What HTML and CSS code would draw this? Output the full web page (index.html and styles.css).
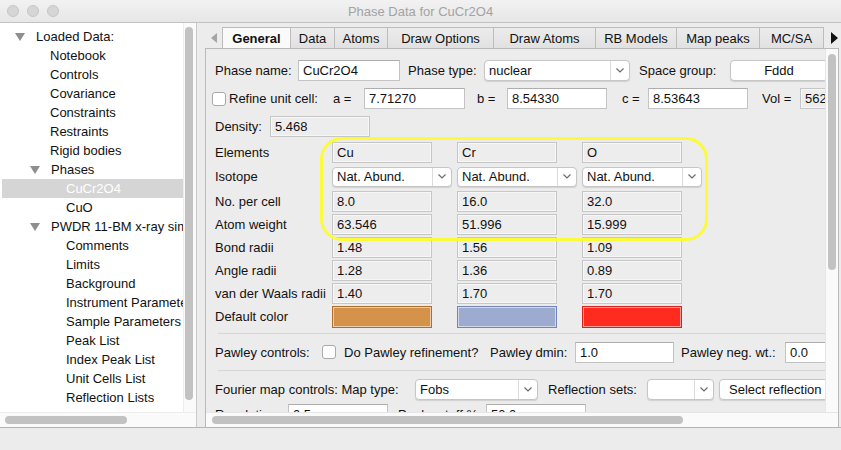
FILE: index.html
```html
<!DOCTYPE html>
<html>
<head>
<meta charset="utf-8">
<title>Phase Data for CuCr2O4</title>
<link rel="stylesheet" href="styles.css">
</head>
<body>
<div class="titlebar">
  <div class="lights"><span class="light"></span><span class="light"></span><span class="light"></span></div>
  <div class="title">Phase Data for CuCr2O4</div>
  <div></div>
</div>
<div class="main">
  <div class="tree-panel">
    <div class="tree-area">
      <ul class="tree">
        <li class="l0"><span class="tri"></span>Loaded Data:</li>
        <li class="l1">Notebook</li>
        <li class="l1">Controls</li>
        <li class="l1">Covariance</li>
        <li class="l1">Constraints</li>
        <li class="l1">Restraints</li>
        <li class="l1">Rigid bodies</li>
        <li class="l1t"><span class="tri"></span>Phases</li>
        <li class="l2 sel">CuCr2O4</li>
        <li class="l2">CuO</li>
        <li class="l1t"><span class="tri"></span>PWDR 11-BM x-ray simulation</li>
        <li class="l2">Comments</li>
        <li class="l2">Limits</li>
        <li class="l2">Background</li>
        <li class="l2">Instrument Parameters</li>
        <li class="l2">Sample Parameters</li>
        <li class="l2">Peak List</li>
        <li class="l2">Index Peak List</li>
        <li class="l2">Unit Cells List</li>
        <li class="l2">Reflection Lists</li>
      </ul>
      <div class="tree-vscroll"><div class="tree-vthumb"></div></div>
    </div>
    <div class="tree-hscroll"><div class="tree-hthumb"></div></div>
  </div>
  <div class="sash"></div>
  <div class="notebook">
    <div class="tabbar">
      <div class="tab-arrow left"><span class="arr-l"></span></div>
      <div class="tab active first w-general">General</div>
      <div class="tab w-data">Data</div>
      <div class="tab w-atoms">Atoms</div>
      <div class="tab w-drawopt">Draw Options</div>
      <div class="tab w-drawatoms">Draw Atoms</div>
      <div class="tab w-rb">RB Models</div>
      <div class="tab w-map">Map peaks</div>
      <div class="tab w-mcsa">MC/SA</div>
      <div class="tab-arrow right"><span class="arr-r"></span></div>
    </div>
    <div class="page">
      <div class="page-body">
        <div class="content">
          <div class="row r1">
            <span class="lbl lw-pname">Phase name:</span>
            <div class="field fw-pname">CuCr2O4</div>
            <span class="lbl lw-ptype">Phase type:</span>
            <div class="select sw-ptype"><span class="val">nuclear</span><span class="chev"><svg width="8" height="5" viewBox="0 0 8 5"><polyline points="0.5,0.5 4,4 7.5,0.5" fill="none" stroke="#6b6b6b" stroke-width="1.2"/></svg></span></div>
            <span class="lbl lw-sg">Space group:</span>
            <div class="btn bw-sg">Fddd</div>
          </div>
          <div class="row r2">
            <span class="check"></span>
            <span class="lbl lw-refine">Refine unit cell:</span>
            <span class="lbl lw-a">a =</span>
            <div class="field fw-a">7.71270</div>
            <span class="lbl lw-b">b =</span>
            <div class="field fw-b">8.54330</div>
            <span class="lbl lw-c">c =</span>
            <div class="field fw-b">8.53643</div>
            <span class="lbl lw-vol">Vol =</span>
            <div class="field ro fw-vol">562.41</div>
          </div>
          <div class="row r3">
            <span class="lbl lw-dens">Density:</span>
            <div class="field ro fw-std">5.468</div>
          </div>

          <div class="table">
            <span class="lbl">Elements</span>
            <div class="field ro fw-std">Cu</div>
            <div class="field ro fw-std">Cr</div>
            <div class="field ro fw-std">O</div>

            <span class="lbl">Isotope</span>
            <div class="select iso"><span class="val">Nat. Abund.</span><span class="chev"><svg width="8" height="5" viewBox="0 0 8 5"><polyline points="0.5,0.5 4,4 7.5,0.5" fill="none" stroke="#6b6b6b" stroke-width="1.2"/></svg></span></div>
            <div class="select iso"><span class="val">Nat. Abund.</span><span class="chev"><svg width="8" height="5" viewBox="0 0 8 5"><polyline points="0.5,0.5 4,4 7.5,0.5" fill="none" stroke="#6b6b6b" stroke-width="1.2"/></svg></span></div>
            <div class="select iso"><span class="val">Nat. Abund.</span><span class="chev"><svg width="8" height="5" viewBox="0 0 8 5"><polyline points="0.5,0.5 4,4 7.5,0.5" fill="none" stroke="#6b6b6b" stroke-width="1.2"/></svg></span></div>

            <span class="lbl">No. per cell</span>
            <div class="field ro fw-std">8.0</div>
            <div class="field ro fw-std">16.0</div>
            <div class="field ro fw-std">32.0</div>

            <span class="lbl">Atom weight</span>
            <div class="field ro fw-std">63.546</div>
            <div class="field ro fw-std">51.996</div>
            <div class="field ro fw-std">15.999</div>

            <span class="lbl">Bond radii</span>
            <div class="field ro fw-std">1.48</div>
            <div class="field ro fw-std">1.56</div>
            <div class="field ro fw-std">1.09</div>

            <span class="lbl">Angle radii</span>
            <div class="field ro fw-std">1.28</div>
            <div class="field ro fw-std">1.36</div>
            <div class="field ro fw-std">0.89</div>

            <span class="lbl">van der Waals radii</span>
            <div class="field ro fw-std">1.40</div>
            <div class="field ro fw-std">1.70</div>
            <div class="field ro fw-std">1.70</div>

            <span class="lbl">Default color</span>
            <div class="swatch sw-cu"></div>
            <div class="swatch sw-cr"></div>
            <div class="swatch sw-o"></div>
          </div>

          <div class="sep s1"></div>
          <div class="row r-pawley">
            <span class="lbl lw-pawley">Pawley controls:</span>
            <span class="check"></span>
            <span class="lbl lw-dopawley">Do Pawley refinement?</span>
            <span class="lbl lw-dmin">Pawley dmin:</span>
            <div class="field fw-dmin">1.0</div>
            <span class="lbl lw-negwt">Pawley neg. wt.:</span>
            <div class="field fw-vol">0.0</div>
          </div>
          <div class="sep s2"></div>
          <div class="row r-fourier">
            <span class="lbl lw-fourier">Fourier map controls: Map type:</span>
            <div class="select sw-map"><span class="val">Fobs</span><span class="chev"><svg width="8" height="5" viewBox="0 0 8 5"><polyline points="0.5,0.5 4,4 7.5,0.5" fill="none" stroke="#6b6b6b" stroke-width="1.2"/></svg></span></div>
            <span class="lbl lw-refl">Reflection sets:</span>
            <div class="select sw-refl"><span class="val"></span><span class="chev"><svg width="8" height="5" viewBox="0 0 8 5"><polyline points="0.5,0.5 4,4 7.5,0.5" fill="none" stroke="#6b6b6b" stroke-width="1.2"/></svg></span></div>
            <div class="btn bw-select">Select reflection sets</div>
          </div>
          <div class="row r-res">
            <span class="lbl lw-res">Resolution:</span>
            <div class="field fw-std">0.5</div>
            <span class="lbl lw-peak">Peak cutoff %:</span>
            <div class="field fw-std">50.0</div>
          </div>

          <div class="annot"></div>
        </div>
        <div class="nb-vscroll"><div class="nb-vthumb"></div></div>
      </div>
      <div class="nb-hscroll"><div class="nb-hthumb"></div></div>
    </div>
  </div>
</div>
<div class="statusbar"></div>
</body>
</html>
```

FILE: styles.css
```css
* { box-sizing: border-box; }
html, body { margin: 0; padding: 0; }
body {
  width: 841px;
  height: 450px;
  overflow: hidden;
  background: #ececec;
  font-family: "Liberation Sans", Arial, sans-serif;
  font-size: 13px;
  color: #111;
}

/* title bar */
.titlebar {
  height: 23px;
  display: grid;
  grid-template-columns: 1fr auto 1fr;
  align-items: center;
  background: linear-gradient(#f2f2f2, #e7e7e7);
  border-bottom: 1px solid #c2c2c2;
}
.lights { display: flex; gap: 8px; padding-left: 7px; }
.light {
  width: 12px; height: 12px; border-radius: 50%;
  background: #d6d6d6; border: 1px solid #c6c6c6;
}
.title { color: #a3a3a3; font-size: 13px; }

/* main area */
.main {
  display: flex;
  height: 405px;
  border-bottom: 1px solid #b5b5b5;
}

/* tree */
.tree-panel {
  width: 197px;
  background: #fff;
  border-right: 1px solid #c9c9c9;
  display: flex;
  flex-direction: column;
}
.tree-area { flex: 1; display: flex; min-height: 0; }
.tree {
  flex: 1;
  list-style: none;
  margin: 0;
  padding: 4px 0 0 2px;
  overflow: hidden;
  min-width: 0;
}
.tree li {
  height: 19px;
  display: flex;
  align-items: center;
  white-space: nowrap;
  color: #111;
}
.tree .l0 { padding-left: 13px; }
.tree .l1 { padding-left: 48px; }
.tree .l1t { padding-left: 28px; }
.tree .l2 { padding-left: 64px; }
.tree .sel { background: #d5d5d5; color: #fff; }
.tri {
  width: 0; height: 0;
  border-left: 5px solid transparent;
  border-right: 5px solid transparent;
  border-top: 8px solid #8e8e8e;
  margin-right: 11px;
  flex: none;
}
.tree-vscroll {
  width: 13px;
  background: #fafafa;
  border-left: 1px solid #ededed;
  padding: 4px 0 0 1px;
}
.tree-vthumb { width: 8px; height: 373px; border-radius: 4px; background: #c2c2c2; }
.tree-hscroll {
  height: 15px;
  background: #fafafa;
  border-top: 1px solid #ededed;
  padding: 3px 0 0 5px;
}
.tree-hthumb { width: 122px; height: 8px; border-radius: 4px; background: #c2c2c2; }

.sash { width: 8px; }

/* notebook */
.notebook { flex: 1; display: flex; flex-direction: column; min-width: 0; }
.tabbar { display: flex; height: 25px; padding-top: 4px; }
.tab-arrow { width: 17px; display: flex; align-items: center; justify-content: center; }
.arr-l {
  width: 0; height: 0;
  border-top: 5px solid transparent; border-bottom: 5px solid transparent;
  border-right: 6px solid #a5a5a5;
}
.arr-r {
  width: 0; height: 0;
  border-top: 6px solid transparent; border-bottom: 6px solid transparent;
  border-left: 7px solid #111;
  margin-left: 3px;
}
.tab {
  display: flex; align-items: center; justify-content: center;
  background: linear-gradient(#ececec, #e1e1e1);
  border: 1px solid #bcbcbc;
  border-left: none;
  border-bottom: none;
  white-space: nowrap;
  color: #111;
}
.tab.first { border-left: 1px solid #bcbcbc; }
.tab.active { background: #fafafa; font-weight: bold; }
.w-general { width: 69px; }
.w-data { width: 44px; }
.w-atoms { width: 53px; }
.w-drawopt { width: 106px; }
.w-drawatoms { width: 102px; }
.w-rb { width: 81px; }
.w-map { width: 83px; }
.w-mcsa { width: 64px; }

.page {
  flex: 1;
  display: flex;
  flex-direction: column;
  border: 1px solid #b9b9b9;
  border-bottom: none;
  margin-right: 2px;
  background: #ececec;
  min-height: 0;
}
.page-body { flex: 1; display: flex; min-height: 0; }
.content {
  flex: 1;
  position: relative;
  overflow: hidden;
  padding: 10px 0 0 6px;
  min-width: 0;
}
.nb-vscroll {
  width: 13px;
  background: #fafafa;
  border-left: 1px solid #e6e6e6;
  padding: 5px 0 0 2px;
}
.nb-vthumb { width: 8px; height: 216px; border-radius: 4px; background: #c2c2c2; }
.nb-hscroll {
  height: 15px;
  background: #fafafa;
  border-top: 1px solid #e6e6e6;
  padding: 3px 0 0 6px;
}
.nb-hthumb { width: 471px; height: 8px; border-radius: 4px; background: #c2c2c2; }

/* form rows */
.row {
  display: flex;
  align-items: center;
  height: 23px;
  padding-left: 3px;
  white-space: nowrap;
}
.r2 { margin-top: 5px; padding-left: 0; }
.r3 { margin-top: 5px; }
.lbl { white-space: nowrap; flex: none; }

.field {
  flex: none;
  height: 21px;
  line-height: 19px;
  padding-left: 4px;
  background: #fff;
  border: 1px solid #c3c3c3;
  border-top-color: #adadad;
  white-space: nowrap;
  overflow: hidden;
  color: #111;
}
.field.ro {
  background: #ededed;
  border: 1px solid #c6c6c6;
  box-shadow: inset 0 0 0 1px #f7f7f7;
}
.select {
  flex: none;
  display: flex;
  align-items: center;
  height: 21px;
  background: #fff;
  border: 1px solid #c6c6c6;
  border-radius: 4px;
  box-shadow: 0 1px 1px rgba(0,0,0,0.12);
}
.select .val { flex: 1; padding-left: 4px; white-space: nowrap; overflow: hidden; }
.select .chev {
  width: 19px; height: 100%;
  border-left: 1px solid #dcdcdc;
  display: flex; align-items: center; justify-content: center;
}
.btn {
  flex: none;
  height: 21px;
  line-height: 19px;
  background: #fff;
  border: 1px solid #c6c6c6;
  border-radius: 4px;
  box-shadow: 0 1px 1px rgba(0,0,0,0.12);
  text-align: center;
  white-space: nowrap;
  overflow: hidden;
}
.check {
  flex: none;
  width: 14px; height: 14px;
  border: 1px solid #a9a9a9;
  border-radius: 3px;
  background: #fff;
}

/* row 1 */
.lw-pname { width: 83px; }
.fw-pname { width: 102px; }
.lw-ptype { width: 76px; margin-left: 8px; }
.sw-ptype { width: 146px; }
.lw-sg { width: 91px; margin-left: 9px; }
.bw-sg { width: 98px; }

/* row 2 */
.r2 .check { margin-right: 3px; }
.lw-refine { width: 104px; }
.lw-a { width: 31px; }
.fw-a { width: 101px; }
.lw-b { width: 30px; margin-left: 12px; }
.fw-b { width: 100px; }
.lw-c { width: 26px; margin-left: 15px; }
.lw-vol { width: 38px; margin-left: 14px; }
.fw-vol { width: 60px; }

/* row 3 */
.lw-dens { width: 55px; }
.fw-std { width: 100px; }

/* element table */
.table {
  display: grid;
  grid-template-columns: 117px 125px 125px 125px;
  grid-template-rows: 23px 25px 24px 23px 23px 23px 23px 23px;
  align-items: center;
  margin-top: 3px;
  padding-left: 3px;
}
.select.iso { width: 120px; height: 20px; }
.swatch {
  width: 100px; height: 22px;
  box-shadow: inset 0 0 0 1px rgba(255,255,255,0.55);
}
.sw-cu { background: #d4924a; border: 1px solid #ad6f30; }
.sw-cr { background: #9dabd0; border: 1px solid #7385b2; }
.sw-o { background: #ff2b1f; border: 1px solid #d4231a; }

.sep { height: 1px; background: #d6d6d6; margin-left: 6px; }
.s1 { margin-top: 5px; }
.s2 { margin-top: 7px; }

.r-pawley { margin-top: 7px; height: 22px; }
.lw-pawley { width: 107px; }
.lw-dopawley { width: 146px; margin-left: 8px; }
.lw-dmin { width: 85px; }
.fw-dmin { width: 99px; }
.lw-negwt { width: 104px; margin-left: 7px; }

.r-fourier { margin-top: 7px; height: 22px; }
.lw-fourier { width: 200px; }
.sw-map { width: 123px; }
.lw-refl { width: 99px; margin-left: 10px; }
.sw-refl { width: 67px; }
.bw-select { width: 150px; margin-left: 5px; text-align: left; padding-left: 9px; }

.r-res { margin-top: 3px; }
.lw-res { width: 73px; }
.lw-peak { width: 88px; margin-left: 10px; }

/* yellow highlight annotation */
.annot {
  position: absolute;
  left: 114px;
  top: 88px;
  width: 388px;
  height: 104px;
  border: 3px solid #fbfb3c;
  border-radius: 22px;
  pointer-events: none;
}

.statusbar { height: 21px; background: #ececec; }
```
